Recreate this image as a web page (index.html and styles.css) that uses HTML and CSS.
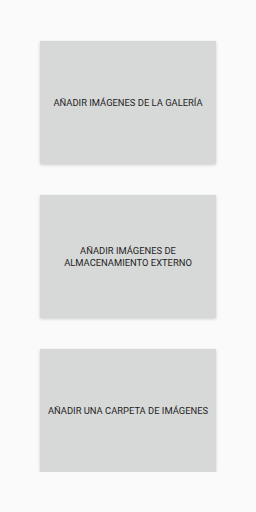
FILE: index.html
```html
<!DOCTYPE html>
<html lang="es">
<head>
  <meta charset="UTF-8">
  <title>Añadir imágenes</title>
  <link rel="stylesheet" href="styles.css">
</head>
<body>
  <div class="list">
    <button class="card">Añadir imágenes de la galería</button>
    <button class="card">Añadir imágenes de almacenamiento externo</button>
    <button class="card">Añadir una carpeta de imágenes</button>
  </div>
</body>
</html>
```

FILE: styles.css
```css
/* RESET & BASE */
* {
  margin: 0;
  padding: 0;
  box-sizing: border-box;
}
body {
  background: #fafafa;
  font-family: Roboto, 'Noto Sans', sans-serif;
}

/* CARD LIST */
.list {
  display: flex;
  flex-direction: column;
  align-items: center;
  gap: 31px;
  padding-top: 41px;
}
.card {
  width: 176px;
  height: 123px;
  padding: 0 4px;
  border: none;
  background: #d7d8d8;
  box-shadow: 0 1px 3px rgba(0,0,0,0.18);
  color: #1e1e1e;
  font-family: inherit;
  font-size: 9.4px;
  line-height: 12px;
  text-transform: uppercase;
  text-align: center;
}
```
